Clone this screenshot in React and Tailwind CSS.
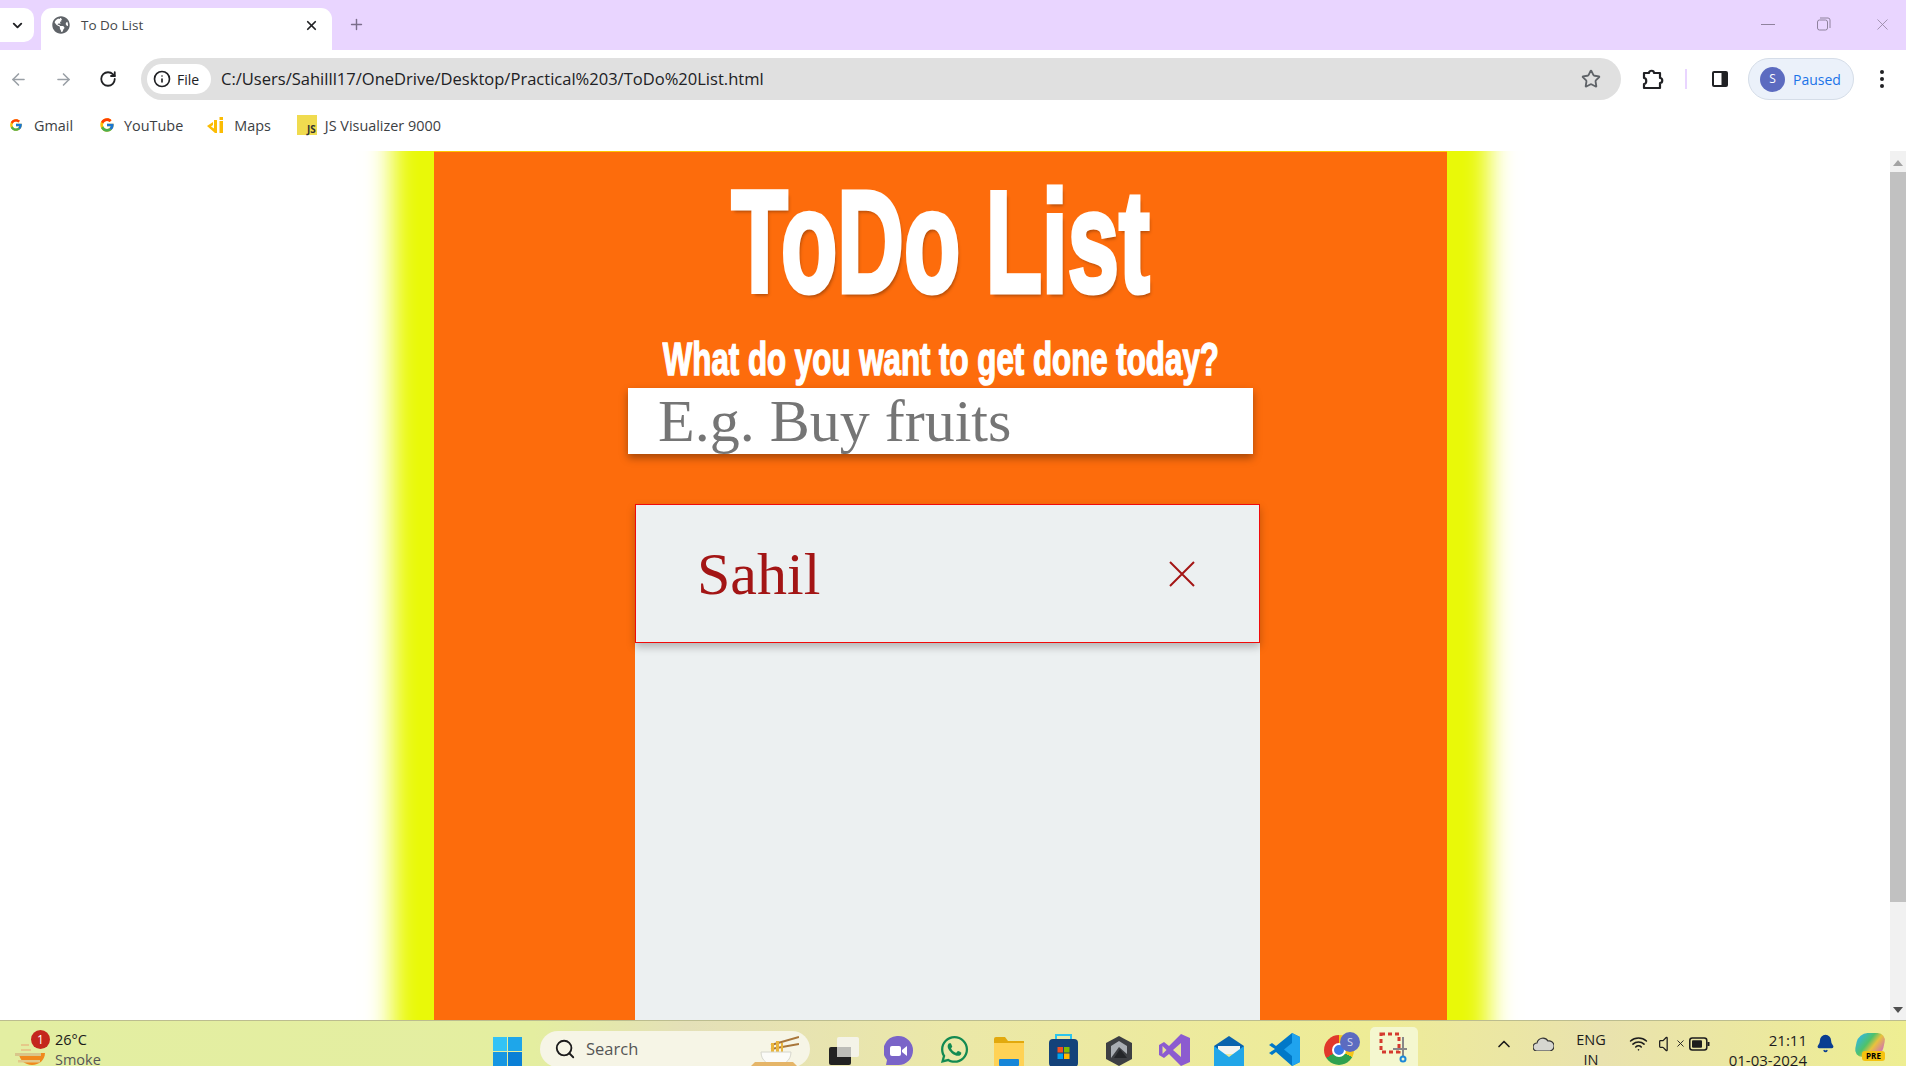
import React from 'react';
import { ArrowLeft, ArrowRight, RotateCw, Star, X, Plus, ChevronDown, ChevronUp, Search, Info, Bell, Wifi, Volume } from 'lucide-react';
import { FcGoogle } from 'react-icons/fc';
import { FaGlobeAmericas, FaWhatsapp } from 'react-icons/fa';

const ui = 'font-["Open_Sans","Liberation_Sans",sans-serif]';

const ExtensionIcon = () => (
  <svg width="22" height="22" viewBox="0 0 22 22" fill="none" stroke="#202124" strokeWidth="2.2" strokeLinejoin="round">
    <path d="M2 5h5c0-3 5-3 5 0h6v5c3 0 3 5 0 5v5H2v-4c3 0 3-6 0-6z" />
  </svg>
);

const SidePanelIcon = () => (
  <svg width="18" height="18" viewBox="0 0 18 18">
    <rect x="1" y="1" width="16" height="16" rx="2" fill="#202124" />
    <rect x="3" y="3" width="7.500" height="12" fill="#fff" />
  </svg>
);

const MapsIcon = () => (
  <svg width="18" height="16" viewBox="0 0 18 16" fill="#fbbc04">
    <path d="M0 9l6-4v3L4 9.500l3 2V3h3v13H8z" />
    <rect x="12.500" y="0" width="3.500" height="3" />
    <rect x="12.500" y="4" width="3.500" height="12" />
  </svg>
);

const Bookmark = ({ icon, label, className }) => (
  <div className={`flex items-center ${className}`}>
    {icon}
    <span className="text-[14.4px] text-[#3c4043]">{label}</span>
  </div>
);

// browser chrome: tab strip, toolbar and bookmarks
const TabStrip = () => (
  <div className="h-[50px] bg-[#e9d5ff] flex items-end shrink-0">
    <div className="w-[34px] h-[34px] bg-white rounded-r-[10px] mb-[8px] flex items-center justify-center">
      <ChevronDown size={15} strokeWidth={3} color="#202124" />
    </div>
    <div className="ml-[7px] w-[291px] h-[42px] bg-white rounded-t-[11px] flex items-center pl-[11px] pb-[8px]">
      <FaGlobeAmericas size={18} color="#5f6368" />
      <span className="ml-[11px] text-[13.5px] text-[#45474a]">To Do List</span>
      <X size={15} strokeWidth={2.8} color="#202124" className="ml-[161px]" />
    </div>
    <Plus size={17} strokeWidth={2} color="#7b6e8b" className="ml-[16px] mb-[17px]" />
    <div className="ml-auto flex items-center h-full pb-[2px] pr-[14px]">
      <div className="w-[14px] h-px bg-[#8f829d]" />
      <svg width="14" height="14" viewBox="0 0 14 14" fill="none" stroke="#8f829d" className="ml-[42px]">
        <rect x="0.500" y="3" width="10" height="10" rx="2" />
        <path d="M3 1h8a2 2 0 0 1 2 2v8" />
      </svg>
      <X size={19} strokeWidth={1} color="#8f829d" className="ml-[42px]" />
    </div>
  </div>
);

const Toolbar = () => (
  <div className="h-[50px] bg-white flex items-center shrink-0 pt-[8px] pb-[0px]">
    <ArrowLeft size={19} color="#9aa0a6" strokeWidth={2} className="ml-[9px]" />
    <ArrowRight size={19} color="#9aa0a6" strokeWidth={2} className="ml-[26px]" />
    <RotateCw size={18} color="#202124" strokeWidth={2.4} className="ml-[26px]" />
    <div className="ml-[24px] w-[1480px] h-[42px] rounded-full bg-[#e0e0e0] flex items-center pl-[6px] pr-[20px]">
      <div className="w-[64px] h-[30px] rounded-full bg-white flex items-center pl-[6px]">
        <Info size={18} color="#202124" strokeWidth={2.2} />
        <span className="ml-[6px] text-[14px] text-[#202124]">File</span>
      </div>
      <span className="ml-[10px] text-[16.55px] text-[#202124]">C:/Users/Sahilll17/OneDrive/Desktop/Practical%203/ToDo%20List.html</span>
      <Star size={20} color="#5f6368" strokeWidth={2.2} className="ml-auto" />
    </div>
    <div className="ml-[21px]"><ExtensionIcon /></div>
    <div className="ml-[21px] w-[2px] h-[20px] bg-[#e9d5ff]" />
    <div className="ml-[24px]"><SidePanelIcon /></div>
    <div className="ml-[19px] w-[106px] h-[42px] rounded-full bg-[#ebf1fa] border border-[#d5dde8] flex items-center pl-[11px]">
      <div className="w-[25px] h-[25px] rounded-full bg-[#5c6bc0] text-white text-[12px] flex items-center justify-center">S</div>
      <span className="ml-[8px] text-[14px] text-[#1a73e8]">Paused</span>
    </div>
    <div className="ml-[26px] flex flex-col gap-[3px]">
      <div className="w-[4px] h-[4px] rounded-full bg-[#202124]" />
      <div className="w-[4px] h-[4px] rounded-full bg-[#202124]" />
      <div className="w-[4px] h-[4px] rounded-full bg-[#202124]" />
    </div>
  </div>
);

const BookmarkBar = () => (
  <div className="h-[51px] bg-white flex items-center pl-[9px] shrink-0">
    <Bookmark className="" icon={<FcGoogle size={14} className="mr-[11px]" />} label="Gmail" />
    <Bookmark className="ml-[26px]" icon={<FcGoogle size={16} className="mr-[9px]" />} label="YouTube" />
    <Bookmark className="ml-[24px]" icon={<span className="mr-[9px]"><MapsIcon /></span>} label="Maps" />
    <Bookmark
      className="ml-[26px]"
      icon={
        <div className="w-[20px] h-[20px] bg-[#f0db4f] mr-[8px] flex items-end justify-end pr-[1px] text-[10px] leading-[12px] font-bold text-[#323330]">JS</div>
      }
      label="JS Visualizer 9000"
    />
  </div>
);

const Scrollbar = () => (
  <div className="w-[16px] bg-[#f1f1f1] flex flex-col items-center shrink-0 pt-[9px] pb-[7px]">
    <div className="w-0 h-0 border-x-[5px] border-x-transparent border-b-[6px] border-b-[#a3a3a3]" />
    <div className="mt-[6px] w-full h-[730px] bg-[#c1c1c1]" />
    <div className="mt-auto w-0 h-0 border-x-[5px] border-x-transparent border-t-[6px] border-t-[#505050]" />
  </div>
);

// the page itself
const TodoPage = () => (
  <div className="flex-1 bg-white overflow-hidden pl-[434px]">
    <div className="w-[1013px] h-full bg-[#fd6c0c] border-t border-t-[#ffc400] shadow-[0_0_24px_42px_#e9f908] flex flex-col items-center">
      <h1 className='mt-[16px] h-[150px] leading-[150px] text-[144px] font-bold text-white whitespace-nowrap font-["Liberation_Sans",sans-serif] scale-x-[.64] [-webkit-text-stroke:5px_white] [text-shadow:3px_4px_4px_rgba(0,0,0,.3)]'>
        ToDo List
      </h1>
      <h2 className='mt-[16px] h-[50px] leading-[50px] text-[46px] font-bold text-white whitespace-nowrap font-["Liberation_Sans",sans-serif] scale-x-[.68] [-webkit-text-stroke:1.5px_white]'>
        What do you want to get done today?
      </h2>
      <input
        readOnly
        placeholder="E.g. Buy fruits"
        className='mt-[4px] w-[625px] h-[66px] bg-white pl-[30px] text-[60px] outline-none font-["Liberation_Serif",serif] placeholder:text-[#757575] shadow-[0_4px_8px_rgba(0,0,0,.35)]'
      />
      <div className="mt-[50px] ml-[14px] w-[625px] flex-1 bg-[#ecf0f1]">
        <div className="h-[139px] border border-[#f00a0a] shadow-[0_4px_8px_rgba(0,0,0,.25)] flex items-center pl-[61px] pr-[64px]">
          <span className='text-[60px] text-[#a31515] font-["Liberation_Serif",serif]'>Sahil</span>
          <svg width="26" height="26" viewBox="0 0 26 26" stroke="#a31515" strokeWidth="2" className="ml-auto">
            <path d="M1 1l24 24M25 1L1 25" />
          </svg>
        </div>
      </div>
    </div>
  </div>
);

// taskbar icons
const WinLogo = () => (
  <svg width="29" height="29" viewBox="0 0 29 29">
    <rect width="14" height="14" fill="#33c3f5" />
    <rect x="15" width="14" height="14" fill="#1ea6ea" />
    <rect y="15" width="14" height="14" fill="#1696e2" />
    <rect x="15" y="15" width="14" height="14" fill="#0a7fd6" />
  </svg>
);

const Weather = () => (
  <svg width="30" height="26" viewBox="0 0 30 26">
    <path d="M4 14h26c0 7-6 12-13 12S4 21 4 14z" fill="#f08a1d" />
    <rect x="0" y="14" width="26" height="3" fill="#d9c68a" />
    <rect x="3" y="21" width="22" height="2.500" fill="#e2c98a" />
    <rect x="6" y="5" width="8" height="2" fill="#e6c98a" />
    <rect x="6" y="10" width="10" height="2" fill="#e6c98a" />
  </svg>
);

const Noodles = () => (
  <svg width="50" height="35" viewBox="0 0 50 35">
    <path d="M22 12L50 4M22 16l28-5" stroke="#a8763a" strokeWidth="2" />
    <path d="M22 10h3v12h-3zM27 8h3v14h-3zM32 10h2v12h-2z" fill="#eab53c" />
    <path d="M12 19h30c0 9-7 13-15 13S12 28 12 19z" fill="#fbfbf8" stroke="#d6d6cc" />
    <path d="M0 35l6-6h38l6 6z" fill="#e5b568" />
  </svg>
);

const TaskView = () => (
  <svg width="30" height="28" viewBox="0 0 30 28">
    <rect y="10" width="22" height="18" rx="2" fill="#222" />
    <rect x="8" width="22" height="20" rx="2" fill="#f6f6f2" fillOpacity=".85" />
    <rect x="8" y="10" width="14" height="10" fill="#bdbdb8" />
  </svg>
);

const Meet = () => (
  <svg width="29" height="32" viewBox="0 0 29 32">
    <path d="M14.500 0a14.500 14.500 0 0 1 0 29H2l1-5A14.500 14.500 0 0 1 14.500 0z" fill="#7a64c8" />
    <rect x="6" y="10" width="11" height="10" rx="2" fill="#fff" />
    <path d="M18 14l5-4v10l-5-4z" fill="#fff" />
  </svg>
);

const Folder = () => (
  <svg width="30" height="29" viewBox="0 0 30 29">
    <path d="M0 2a2 2 0 0 1 2-2h9l3 4h16v25H0z" fill="#e2a90d" />
    <rect y="6" width="30" height="23" fill="#ffd255" />
    <rect x="5" y="22" width="20" height="7" rx="1" fill="#1686d8" />
  </svg>
);

const Store = () => (
  <svg width="29" height="33" viewBox="0 0 29 33">
    <path d="M7 6V1h15v5" fill="none" stroke="#2cc5ee" strokeWidth="2" />
    <rect y="5" width="29" height="28" rx="4" fill="#14427a" />
    <rect x="8.500" y="13" width="5.500" height="5.500" fill="#f25022" />
    <rect x="15" y="13" width="5.500" height="5.500" fill="#7fba00" />
    <rect x="8.500" y="19.500" width="5.500" height="5.500" fill="#00a4ef" />
    <rect x="15" y="19.500" width="5.500" height="5.500" fill="#ffb900" />
  </svg>
);

const HexApp = () => (
  <svg width="26" height="30" viewBox="0 0 26 30">
    <path d="M13 0l13 7v16l-13 7L0 23V7z" fill="#3d3f43" />
    <path d="M13 5l8 5v8L13 11 5 22V10z" fill="#a9adb3" />
    <path d="M8 22l6-9 7 9z" fill="#24262a" />
  </svg>
);

const VisualStudio = () => (
  <svg width="31" height="32" viewBox="0 0 31 32">
    <path d="M22 0l9 4v24l-9 4-12-12-5 4-5-3V11l5-3 5 4z" fill="#8c5bd0" />
    <path d="M22 9v14l-8-7zM3.500 12v8l4-4z" fill="#e8e49a" />
  </svg>
);

const Mail = () => (
  <svg width="30" height="30" viewBox="0 0 30 30">
    <path d="M15 0l15 10v4H0v-4z" fill="#0a63ad" />
    <path d="M4 10h22v8H4z" fill="#f4f4f0" />
    <path d="M0 10l15 11 15-11v20H0z" fill="#21a6e8" />
  </svg>
);

const VsCode = () => (
  <svg width="31" height="33" viewBox="0 0 31 33">
    <path d="M23 0l8 4v25l-8 4L7 19l-4 3-3-2 6-4-6-4 3-2 4 3z" fill="#0078c8" />
    <path d="M23 0l8 4v25l-8 4V23l-8-6.500L23 10z" fill="#1fa3ee" />
  </svg>
);

const Chrome = () => (
  <div className="relative w-[31px] h-[32px]">
    <div className="w-[30px] h-[30px] mt-[2px] rounded-full bg-[conic-gradient(#f5c518_0_33%,#2fa14f_33%_66%,#e1382b_66%_100%)] flex items-center justify-center">
      <div className="w-[14px] h-[14px] rounded-full bg-[#3b78e7] border-2 border-white" />
    </div>
    <div className="absolute -top-[3px] -right-[5px] w-[20px] h-[20px] rounded-full bg-[#5c6bc0] text-[11px] leading-[20px] text-center text-[#d5d9f0]">S</div>
  </div>
);

const Snip = () => (
  <svg width="30" height="32" viewBox="0 0 30 32" fill="none">
    <rect x="2" y="3" width="18" height="18" stroke="#d43a2f" strokeWidth="3" strokeDasharray="4 3" />
    <path d="M24 6v20" stroke="#888" strokeWidth="2" />
    <path d="M14 18l14 0" stroke="#888" strokeWidth="2" />
    <circle cx="24" cy="28" r="2.500" stroke="#1c88d8" strokeWidth="2" />
  </svg>
);

const Cloud = () => (
  <svg width="21" height="14" viewBox="0 0 21 14">
    <path d="M4 14a4 4 0 0 1 0-8 6 6 0 0 1 11-2 5 5 0 0 1 2 10z" fill="#d6d6d0" stroke="#333" strokeWidth="1.200" />
  </svg>
);

const Battery = () => (
  <svg width="21" height="14" viewBox="0 0 21 14">
    <rect x="0.800" y="1" width="17" height="12" rx="2.500" fill="none" stroke="#1c1c1c" strokeWidth="1.500" />
    <rect x="3" y="3.200" width="10" height="7.600" rx="1" fill="#1c1c1c" />
    <rect x="18.500" y="5" width="2" height="4" fill="#1c1c1c" />
  </svg>
);

const Copilot = () => (
  <div className="relative w-[29px] h-[28px]">
    <div className="w-[28px] h-[24px] rounded-[9px] skew-x-[-12deg] bg-[linear-gradient(120deg,#2fb5f0_0%,#4fc26a_40%,#e9c23c_60%,#c85bd8_100%)]" />
    <div className="absolute left-[6px] bottom-0 w-[23px] h-[10px] rounded-[3px] bg-[#f5c20f] text-[8px] leading-[10px] font-bold text-center text-black">PRE</div>
  </div>
);

const Taskbar = () => (
  <div className={`h-[46px] shrink-0 border-t border-t-[#bcbd8f] bg-[linear-gradient(90deg,#e3eea2_0%,#e4eea0_28%,#e4e0b8_36%,#ebe8a8_50%,#eeec96_72%,#e9e2ae_84%,#eeee92_100%)] flex items-center overflow-hidden ${ui}`}>
    <div className="relative ml-[15px] mt-[16px]">
      <Weather />
      <div className="absolute -top-[9px] left-[16px] w-[19px] h-[19px] rounded-full bg-[#c4261d] text-white text-[12px] leading-[19px] text-center">1</div>
    </div>
    <div className="ml-[10px] w-[60px] self-start mt-[9px] flex flex-col text-[14.5px] leading-[20px]">
      <span className="text-[#1a1a1a]">26°C</span>
      <span className="text-[#555]">Smoke</span>
    </div>
    <div className="ml-[378px] mt-[15px]"><WinLogo /></div>
    <div className="ml-[18px] w-[270px] h-[36px] mt-[10px] self-start rounded-full bg-[#f6f5e6] flex items-center pl-[14px] overflow-hidden">
      <Search size={22} color="#1c1c1c" strokeWidth={2} />
      <span className="ml-[10px] text-[16.5px] text-[#555]">Search</span>
      <div className="ml-auto mr-[11px] mt-[2px]"><Noodles /></div>
    </div>
    <div className="ml-[19px] mt-[14px]"><TaskView /></div>
    <div className="ml-[25px] mt-[16px]"><Meet /></div>
    <div className="ml-[26px] mt-[12px]"><FaWhatsapp size={31} color="#138a52" /></div>
    <div className="ml-[24px] mt-[15px]"><Folder /></div>
    <div className="ml-[25px] mt-[14px]"><Store /></div>
    <div className="ml-[28px] mt-[14px]"><HexApp /></div>
    <div className="ml-[27px] mt-[12px]"><VisualStudio /></div>
    <div className="ml-[24px] mt-[14px]"><Mail /></div>
    <div className="ml-[25px] mt-[12px]"><VsCode /></div>
    <div className="ml-[24px] mt-[12px]"><Chrome /></div>
    <div className="ml-[15px] w-[48px] h-[40px] mt-[6px] rounded-t-[5px] bg-[#f4f7cf] flex items-center justify-center"><Snip /></div>
    <ChevronUp size={20} color="#1c1c1c" strokeWidth={2} className="ml-[76px]" />
    <div className="ml-[19px]"><Cloud /></div>
    <div className="ml-[23px] w-[28px] self-start mt-[9px] flex flex-col items-center text-[14.5px] leading-[20px] text-[#1c1c1c]">
      <span>ENG</span>
      <span>IN</span>
    </div>
    <Wifi size={19} color="#1c1c1c" strokeWidth={2} className="ml-[24px]" />
    <div className="ml-[10px] flex items-center">
      <Volume size={20} color="#1c1c1c" strokeWidth={1.5} />
      <X size={11} color="#1c1c1c" strokeWidth={2} className="-ml-[3px]" />
    </div>
    <div className="ml-[3px]"><Battery /></div>
    <div className="ml-[17px] w-[80px] self-start mt-[9px] flex flex-col items-end text-[15px] leading-[20px] text-[#1c1c1c]">
      <span>21:11</span>
      <span className="whitespace-nowrap">01-03-2024</span>
    </div>
    <Bell size={19} color="#0a3d91" fill="#0a3d91" className="ml-[9px]" />
    <div className="ml-[21px] mt-[6px]"><Copilot /></div>
  </div>
);

export default function App() {
  return (
    <div className={`w-[1906px] h-[1066px] flex flex-col overflow-hidden ${ui}`}>
      <TabStrip />
      <Toolbar />
      <BookmarkBar />
      <div className="flex-1 flex min-h-0">
        <TodoPage />
        <Scrollbar />
      </div>
      <Taskbar />
    </div>
  );
}
